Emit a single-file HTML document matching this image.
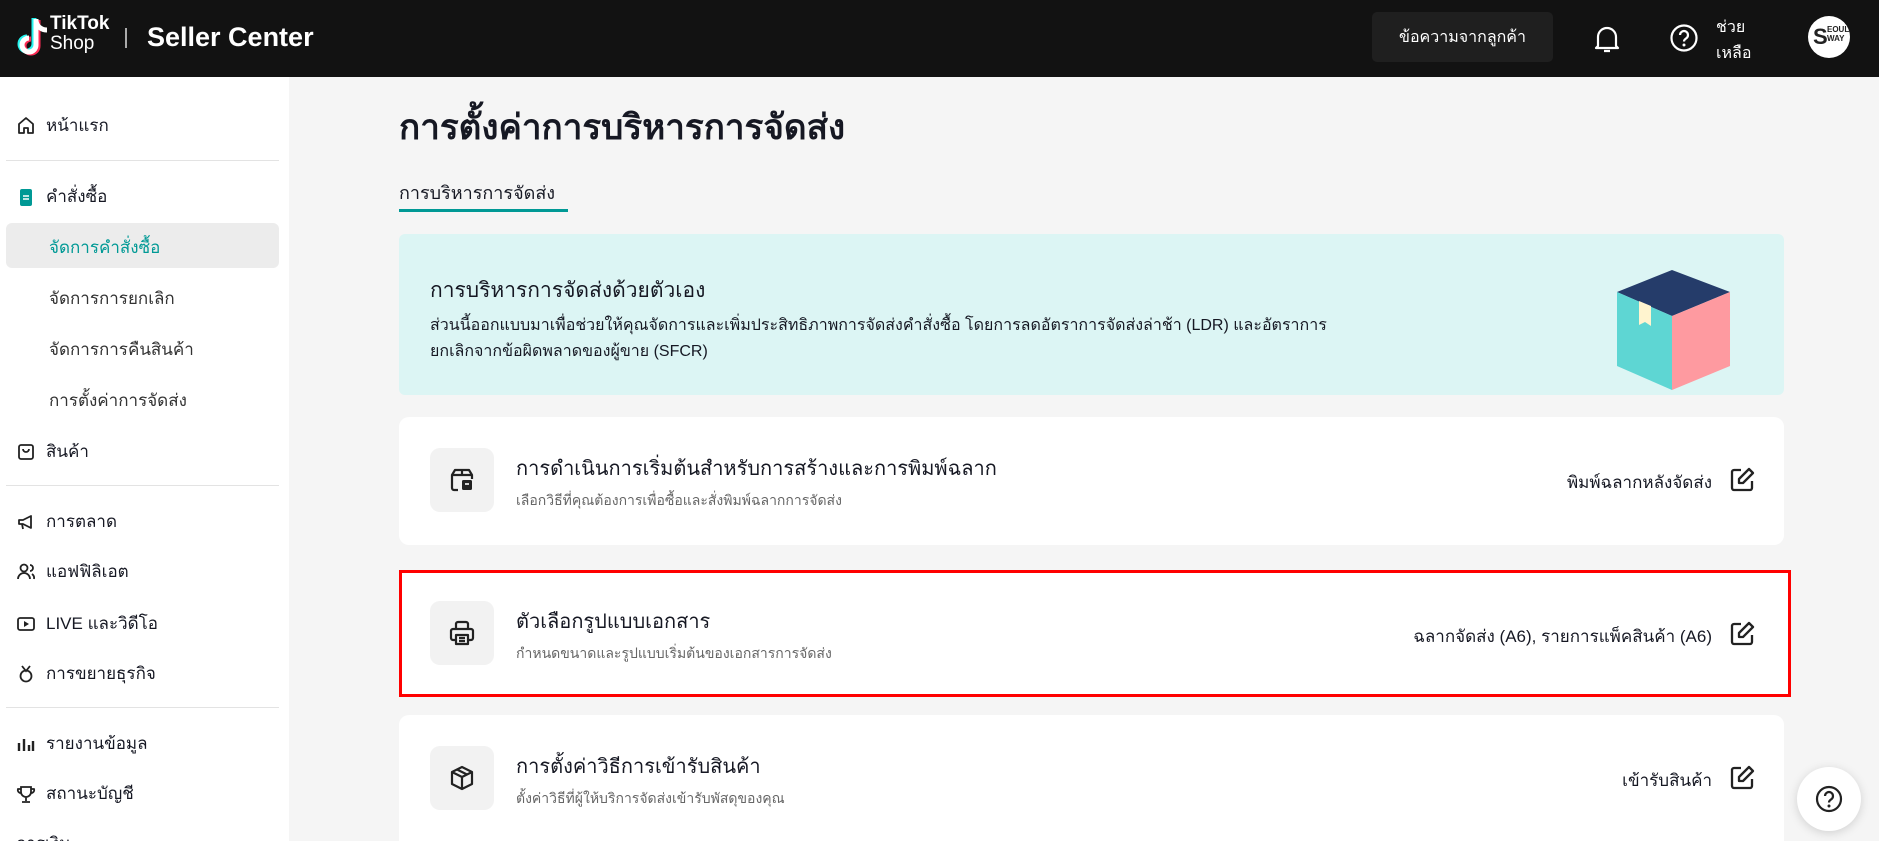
<!DOCTYPE html>
<html style="overflow:hidden;width:1879px;height:841px"><head><meta charset="utf-8"><style>
*{box-sizing:border-box;margin:0;padding:0}
body{width:1879px;height:841px;overflow:hidden;background:#f5f5f5;font-family:"Liberation Sans","Noto Sans CJK SC",sans-serif;color:#161823;position:relative}
.hdr{position:absolute;left:0;top:0;width:1879px;height:77px;background:#121212;color:#fff}
.side{position:absolute;left:0;top:77px;width:289px;height:764px;background:#fff;overflow:hidden}
.si{position:absolute;left:16px;font-size:17px;display:flex;align-items:center;gap:10px}
.sub{position:absolute;left:49px;font-size:17px;color:#333}
.div{position:absolute;left:6px;width:273px;height:1px;background:#e3e3e3}
.card{position:absolute;left:399px;width:1385px;background:#fff;border-radius:10px}
.ib{position:absolute;left:31px;width:64px;height:64px;background:#f2f2f2;border-radius:10px;display:flex;align-items:center;justify-content:center}
.ct{position:absolute;left:117px;font-size:20px;color:#161823}
.cs{position:absolute;left:117px;font-size:14px;color:#666}
.cr{position:absolute;right:72px;font-size:17px;color:#161823}
.ed{position:absolute;right:28px}
</style></head><body>
<div class="hdr">
 <svg style="position:absolute;left:16px;top:17px" width="36" height="42" viewBox="0 0 36 42"><path d="M20 2v26a7 7 0 1 1-7-7" fill="none" stroke="#25f4ee" stroke-width="5" transform="translate(-2,-1)"/><path d="M20 2v26a7 7 0 1 1-7-7" fill="none" stroke="#fe2c55" stroke-width="5" transform="translate(2,1)"/><path d="M20 2v26a7 7 0 1 1-7-7M20 4c1 6 6 9 11 9" fill="none" stroke="#fff" stroke-width="5"/></svg>
 <div style="position:absolute;left:50px;top:15px;font-size:19px;font-weight:bold;line-height:18px">TikTok</div>
 <div style="position:absolute;left:50px;top:34px;font-size:19px;line-height:20px">Shop</div>
 <div style="position:absolute;left:125px;top:28px;width:2px;height:20px;background:#aaa"></div>
 <div style="position:absolute;left:147px;top:22px;font-size:27px;font-weight:bold">Seller Center</div>
 <div style="position:absolute;left:1372px;top:12px;width:181px;height:50px;background:#1f1f1f;border-radius:5px;font-size:16px;display:flex;align-items:center;justify-content:center">ข้อความจากลูกค้า</div>
 <svg style="position:absolute;left:1593px;top:25px" width="28" height="30" viewBox="0 0 28 30"><path d="M5 21V12a9 9 0 0 1 18 0v9l2 2H3z M11 26h6" fill="none" stroke="#fff" stroke-width="2.2" stroke-linejoin="round"/></svg>
 <svg style="position:absolute;left:1669px;top:23px" width="30" height="30" viewBox="0 0 30 30"><circle cx="15" cy="15" r="12.5" fill="none" stroke="#fff" stroke-width="2.2"/><path d="M11 12a4 4 0 1 1 6 3.5c-1.5 1-2 1.5-2 3" fill="none" stroke="#fff" stroke-width="2.2"/><circle cx="15" cy="22" r="1.5" fill="#fff"/></svg>
 <div style="position:absolute;left:1716px;top:15px;font-size:16px;line-height:26px">ช่วย<br>เหลือ</div>
 <div style="position:absolute;left:1808px;top:16px;width:42px;height:42px;border-radius:50%;background:#fff;color:#222;font-size:22px;font-weight:bold;line-height:42px;padding-left:5px">S<span style="font-size:8px;position:absolute;top:9px;left:19px;line-height:9px">EOUL<br>WAY</span></div>
</div>
<div class="side">
 <div class="si" style="top:35px"><svg width="20" height="20" viewBox="0 0 20 20"><path d="M3 17V8l7-6 7 6v9h-5v-5H8v5z" fill="none" stroke="#222" stroke-width="1.8" stroke-linejoin="round"/></svg>หน้าแรก</div>
 <div class="div" style="top:83px"></div>
 <div class="si" style="top:106px"><svg width="20" height="20" viewBox="0 0 20 20"><rect x="4" y="2" width="12" height="17" rx="2" fill="#009995"/><path d="M7 9h6M7 12h6" stroke="#fff" stroke-width="1.6"/></svg>คำสั่งซื้อ</div>
 <div style="position:absolute;left:6px;top:146px;width:273px;height:45px;background:#ececec;border-radius:6px"></div>
 <div class="sub" style="top:157px;color:#009995">จัดการคำสั่งซื้อ</div>
 <div class="sub" style="top:208px">จัดการการยกเลิก</div>
 <div class="sub" style="top:259px">จัดการการคืนสินค้า</div>
 <div class="sub" style="top:310px">การตั้งค่าการจัดส่ง</div>
 <div class="si" style="top:361px"><svg width="20" height="20" viewBox="0 0 20 20"><rect x="3" y="3" width="14" height="14" rx="2" fill="none" stroke="#222" stroke-width="1.8"/><path d="M7 7a3 3 0 0 0 6 0" fill="none" stroke="#222" stroke-width="1.8"/></svg>สินค้า</div>
 <div class="div" style="top:408px"></div>
 <div class="si" style="top:431px"><svg width="20" height="20" viewBox="0 0 20 20"><path d="M3 8h4l8-4v12l-8-4H3zM6 12l1 5" fill="none" stroke="#222" stroke-width="1.8" stroke-linejoin="round"/></svg>การตลาด</div>
 <div class="si" style="top:481px"><svg width="20" height="20" viewBox="0 0 20 20"><circle cx="8" cy="6" r="3.5" fill="none" stroke="#222" stroke-width="1.8"/><path d="M2 17a6 6 0 0 1 12 0M14 3a3 3 0 0 1 0 6M16 12a5 5 0 0 1 2 5" fill="none" stroke="#222" stroke-width="1.8"/></svg>แอฟฟิลิเอต</div>
 <div class="si" style="top:533px"><svg width="20" height="20" viewBox="0 0 20 20"><rect x="2" y="4" width="16" height="12" rx="2" fill="none" stroke="#222" stroke-width="1.8"/><path d="M8 7v6l5-3z" fill="#222"/></svg>LIVE และวิดีโอ</div>
 <div class="si" style="top:583px"><svg width="20" height="20" viewBox="0 0 20 20"><circle cx="10" cy="12" r="5.5" fill="none" stroke="#222" stroke-width="1.8"/><path d="M6 2l4 5 4-5" fill="none" stroke="#222" stroke-width="1.8"/></svg>การขยายธุรกิจ</div>
 <div class="div" style="top:630px"></div>
 <div class="si" style="top:653px"><svg width="20" height="20" viewBox="0 0 20 20"><path d="M3 17V9M8 17V5M13 17v-6M17 17V7" stroke="#222" stroke-width="2.4"/></svg>รายงานข้อมูล</div>
 <div class="si" style="top:703px"><svg width="20" height="20" viewBox="0 0 20 20"><path d="M5 3h10v5a5 5 0 0 1-10 0zM10 13v4M6 18h8M5 5H2a3 3 0 0 0 3 4M15 5h3a3 3 0 0 1-3 4" fill="none" stroke="#222" stroke-width="1.8"/></svg>สถานะบัญชี</div>
 <div class="si" style="top:753px">การเงิน</div>
</div>
<div style="position:absolute;left:399px;top:100px;font-size:35px;font-weight:bold">การตั้งค่าการบริหารการจัดส่ง</div>
<div style="position:absolute;left:399px;top:178px;font-size:18px">การบริหารการจัดส่ง</div>
<div style="position:absolute;left:399px;top:209px;width:169px;height:3px;background:#009995"></div>
<div style="position:absolute;left:399px;top:234px;width:1385px;height:161px;background:#dcf5f4;border-radius:6px">
 <div style="position:absolute;left:31px;top:40px;font-size:21px">การบริหารการจัดส่งด้วยตัวเอง</div>
 <div style="position:absolute;left:31px;top:79px;font-size:16px;line-height:26px">ส่วนนี้ออกแบบมาเพื่อช่วยให้คุณจัดการและเพิ่มประสิทธิภาพการจัดส่งคำสั่งซื้อ โดยการลดอัตราการจัดส่งล่าช้า (LDR) และอัตราการ<br>ยกเลิกจากข้อผิดพลาดของผู้ขาย (SFCR)</div>
 <svg style="position:absolute;left:1218px;top:36px" width="115" height="120" viewBox="0 0 115 120"><path d="M0 22L55 0l58 22-58 24z" fill="#253c6a"/><path d="M0 22l55 24v74L0 96z" fill="#5ed6d3"/><path d="M55 46l58-24v74l-58 24z" fill="#fe9aa0"/><path d="M22 31l12 5v20l-6-4-6 3z" fill="#fff4cf"/></svg>
</div>
<div class="card" style="top:417px;height:128px">
 <div class="ib" style="top:31px"><svg width="28" height="28" viewBox="0 0 28 28"><path d="M10 24H6a2 2 0 0 1-2-2V9l3-5h14l3 5v4M4 9h20M14 4v5" fill="none" stroke="#222" stroke-width="2.2" stroke-linejoin="round"/><rect x="14" y="14" width="10" height="10" rx="1.5" fill="#222"/><path d="M17 18h4" stroke="#fff" stroke-width="1.6"/></svg></div>
 <div class="ct" style="top:35px">การดำเนินการเริ่มต้นสำหรับการสร้างและการพิมพ์ฉลาก</div>
 <div class="cs" style="top:73px">เลือกวิธีที่คุณต้องการเพื่อซื้อและสั่งพิมพ์ฉลากการจัดส่ง</div>
 <div class="cr" style="top:52px">พิมพ์ฉลากหลังจัดส่ง</div>
 <svg class="ed" style="top:49px" width="28" height="28" viewBox="0 0 28 28"><path d="M13 4H6a2 2 0 0 0-2 2v16a2 2 0 0 0 2 2h16a2 2 0 0 0 2-2v-7M11 17v-4L21 3l4 4-10 10z" fill="none" stroke="#222" stroke-width="2.3" stroke-linejoin="round"/></svg>
</div>
<div class="card" style="top:570px;height:127px;border:3px solid #f00;border-radius:0;width:1392px">
 <div class="ib" style="top:28px;left:28px"><svg width="28" height="28" viewBox="0 0 28 28"><path d="M8 10V5a2 2 0 0 1 2-2h8a2 2 0 0 1 2 2v5M8 21H5a2 2 0 0 1-2-2v-7a2 2 0 0 1 2-2h18a2 2 0 0 1 2 2v7a2 2 0 0 1-2 2h-3M8 16h12v9H8zM11 19h6M11 22h6" fill="none" stroke="#222" stroke-width="2.2" stroke-linejoin="round"/></svg></div>
 <div class="ct" style="top:32px;left:114px">ตัวเลือกรูปแบบเอกสาร</div>
 <div class="cs" style="top:70px;left:114px">กำหนดขนาดและรูปแบบเริ่มต้นของเอกสารการจัดส่ง</div>
 <div class="cr" style="top:50px;right:76px">ฉลากจัดส่ง (A6), รายการแพ็คสินค้า (A6)</div>
 <svg class="ed" style="top:47px;right:32px" width="28" height="28" viewBox="0 0 28 28"><path d="M13 4H6a2 2 0 0 0-2 2v16a2 2 0 0 0 2 2h16a2 2 0 0 0 2-2v-7M11 17v-4L21 3l4 4-10 10z" fill="none" stroke="#222" stroke-width="2.3" stroke-linejoin="round"/></svg>
</div>
<div class="card" style="top:715px;height:126px;border-radius:10px 10px 0 0">
 <div class="ib" style="top:31px"><svg width="28" height="28" viewBox="0 0 28 28"><path d="M14 3l10 5v12l-10 5-10-5V8zM4 8l10 5 10-5M14 13v12M9 5.5l10 5" fill="none" stroke="#222" stroke-width="2.2" stroke-linejoin="round"/></svg></div>
 <div class="ct" style="top:35px">การตั้งค่าวิธีการเข้ารับสินค้า</div>
 <div class="cs" style="top:73px">ตั้งค่าวิธีที่ผู้ให้บริการจัดส่งเข้ารับพัสดุของคุณ</div>
 <div class="cr" style="top:52px">เข้ารับสินค้า</div>
 <svg class="ed" style="top:49px" width="28" height="28" viewBox="0 0 28 28"><path d="M13 4H6a2 2 0 0 0-2 2v16a2 2 0 0 0 2 2h16a2 2 0 0 0 2-2v-7M11 17v-4L21 3l4 4-10 10z" fill="none" stroke="#222" stroke-width="2.3" stroke-linejoin="round"/></svg>
</div>
<div style="position:absolute;left:1797px;top:767px;width:64px;height:64px;border-radius:50%;background:#fff;box-shadow:0 2px 10px rgba(0,0,0,.15);display:flex;align-items:center;justify-content:center"><svg width="30" height="30" viewBox="0 0 30 30"><circle cx="15" cy="15" r="12" fill="none" stroke="#222" stroke-width="2.2"/><path d="M11 12a4 4 0 1 1 6 3.5c-1.5 1-2 1.5-2 3" fill="none" stroke="#222" stroke-width="2.2"/><circle cx="15" cy="22" r="1.5" fill="#222"/></svg></div>
</body></html>
